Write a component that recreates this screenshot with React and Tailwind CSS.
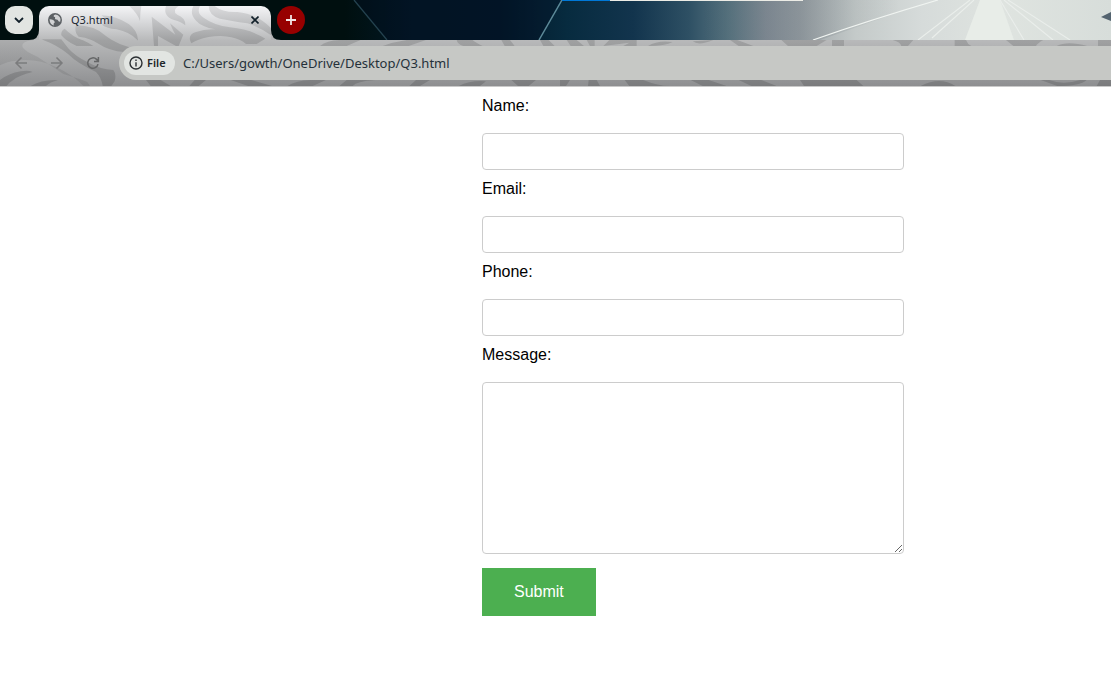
import React from 'react';

function ThemePattern({ id, viewBox }) {
  return (
    <svg
      aria-hidden="true"
      className="absolute inset-0 h-full w-full"
      viewBox={viewBox}
      preserveAspectRatio="xMinYMin slice"
    >
      <defs>
        <linearGradient id={`${id}-light`} gradientUnits="userSpaceOnUse" x1="0" y1="18" x2="0" y2="258">
          <stop offset="0" stopColor="#f4f4f6" />
          <stop offset="0.2" stopColor="#d8d9db" />
          <stop offset="0.43" stopColor="#b8b9ba" />
          <stop offset="1" stopColor="#8e8f91" />
        </linearGradient>
        <linearGradient id={`${id}-dark`} gradientUnits="userSpaceOnUse" x1="0" y1="18" x2="0" y2="258">
          <stop offset="0" stopColor="#dcdcde" />
          <stop offset="0.2" stopColor="#c0c1c3" />
          <stop offset="0.43" stopColor="#a0a1a2" />
          <stop offset="1" stopColor="#7a7b7d" />
        </linearGradient>
      </defs>
      <rect width="3333" height="258" fill={`url(#${id}-light)`} />
      <g fill={`url(#${id}-dark)`}>
        <path
          fillOpacity="0.55"
          d="M0 120H100Q62 124 68 142Q74 154 112 170Q152 196 190 222Q238 236 262 246L270 258H250Q220 226 170 202Q110 174 50 182Q20 184 0 196Z"
        />
        <path d="M124 118H184L206 146Q226 168 262 186Q300 208 340 210Q350 222 344 244L334 258H308Q304 232 288 216Q232 190 204 162Q170 134 124 118Z" />
        <path d="M0 240Q26 220 62 214Q86 210 98 216Q56 226 40 240Q26 248 20 258H0Z" />
        <path d="M92 258Q124 238 174 240Q150 246 138 258Z" />
        <path d="M228 76Q284 76 318 108Q350 132 388 142L372 156Q330 154 290 128Q262 112 236 110Q222 96 228 76Z" />
        <path d="M304 46Q350 48 386 72Q414 92 414 122Q390 96 350 88Q316 84 306 74Q336 66 304 46Z" />
        <path d="M184 106Q182 92 194 86Q220 112 252 122Q270 130 280 138H230Q202 126 184 106Z" />
        <path d="M388 18H424Q420 40 420 64Q414 42 388 18Z" />
        <path d="M455 50L526 104Q516 86 510 70L550 104L536 138H528L474 108V138H462Z" />
        <path d="M498 18H536Q514 32 532 44Q558 54 556 76Q544 66 522 60Q488 48 498 18Z" />
        <path d="M580 18H600Q588 40 612 54Q642 76 690 82Q752 88 796 116L770 132H738Q714 110 662 108Q610 108 574 130Q560 104 588 96Q616 86 646 88Q604 80 588 62Q568 42 580 18Z" />
        <path d="M626 18H644Q668 38 712 36Q772 42 813 84V106Q782 82 742 70Q692 62 660 56Q626 46 626 18Z" />
        <path d="M438 240H482L512 258H452ZM584 240H618L596 258H568ZM692 240H754L816 258H744Z" />
        <path d="M960 138Q980 122 1018 120H1082L1040 138ZM1148 138Q1180 126 1220 120H1278L1226 138ZM1370 120Q1372 132 1390 138H1448Q1424 126 1418 120ZM1504 120H1530L1544 138H1514ZM1620 120H1646L1664 138H1630ZM1700 120H1730L1752 138H1712ZM1760 120H1784V138H1770Z" />
        <path d="M1810 138L1828 120H1910V138H1870L1888 128ZM1944 138Q1972 120 2018 126Q1996 138 1944 138ZM2078 124Q2096 138 2140 120ZM2190 120L2216 138H2260L2212 120ZM2344 120L2364 138H2450L2480 120Z" />
        <path d="M2496 120H2532V138H2496ZM2678 120H2740L2724 138H2704Q2702 126 2678 120ZM2864 120H2898Q2902 132 2914 138H2864ZM3018 120H3130Q3112 130 3108 138H3040ZM3170 138Q3202 122 3262 138ZM3294 120H3333V138H3294Z" />
        <path d="M862 258Q890 242 930 240H978L938 258ZM1018 258L1040 240H1126Q1070 244 1058 258ZM1228 258L1248 240H1290L1260 258ZM1376 258Q1412 240 1458 244L1440 258ZM1534 240H1608L1586 258H1554ZM1680 240H1710L1698 258H1680ZM1766 240H1790L1800 258H1764ZM1874 240H1930Q1974 258 2010 258H1888Z" />
        <path d="M2072 240H2126L2180 258H2108ZM2216 240H2284L2330 258H2254ZM2400 240H2570L2590 258H2412ZM2762 258Q2820 228 2866 258ZM3122 240H3148Q3190 256 3240 240H3260Q3240 258 3172 258ZM3300 240H3333V258H3290Z" />
      </g>
    </svg>
  );
}

function Wallpaper() {
  return (
    <svg
      aria-hidden="true"
      className="absolute inset-0 h-full w-full"
      viewBox="0 0 1111 40"
      preserveAspectRatio="xMinYMin slice"
    >
      <defs>
        <linearGradient id="sky" gradientUnits="userSpaceOnUse" x1="0" y1="0" x2="1111" y2="0">
          <stop offset="0" stopColor="#000f0f" />
          <stop offset="0.31" stopColor="#000f0f" />
          <stop offset="0.37" stopColor="#021825" />
          <stop offset="0.45" stopColor="#021828" />
          <stop offset="0.51" stopColor="#072b3f" />
          <stop offset="0.57" stopColor="#12344d" />
          <stop offset="0.62" stopColor="#2e5064" />
          <stop offset="0.655" stopColor="#56727e" />
          <stop offset="0.69" stopColor="#858f98" />
          <stop offset="0.73" stopColor="#a5acaf" />
          <stop offset="0.77" stopColor="#c4cac9" />
          <stop offset="0.83" stopColor="#d6dbda" />
          <stop offset="0.9" stopColor="#dfe4e0" />
          <stop offset="1" stopColor="#d7ddda" />
        </linearGradient>
        <linearGradient id="shade" gradientUnits="userSpaceOnUse" x1="700" y1="0" x2="900" y2="0">
          <stop offset="0" stopColor="#1a2a38" stopOpacity="0" />
          <stop offset="0.5" stopColor="#1a2a38" stopOpacity="0.14" />
          <stop offset="1" stopColor="#1a2a38" stopOpacity="0" />
        </linearGradient>
      </defs>
      <rect width="1111" height="40" fill="url(#sky)" />
      <path d="M700 0H900V12L820 40H700Z" fill="url(#shade)" />
      <path d="M354 0L387 40H539L561 0Z" fill="#020f22" fillOpacity="0.4" />
      <path d="M980 0H1000L1014 40H965Z" fill="#e8ede8" />
      <g fill="none">
        <path d="M354 0L387 40" stroke="#24424f" strokeWidth="1.3" />
        <path d="M562 0L539 40" stroke="#5d8a99" strokeWidth="1.5" />
        <path d="M813 40Q870 20 938 0" stroke="#f0f4f1" strokeWidth="1.2" />
        <path d="M918 40L970 0M932 38L974 0M1000 0L1024 40M1004 0L1053 40M1008 0L1070 40" stroke="#eaeeeb" strokeWidth="1.1" />
      </g>
      <path d="M1101 17L1111 12V21Z" fill="#53636f" />
      <path d="M562 0H610V1H562Z" fill="#0078d7" />
      <path d="M610 0H803V1H610Z" fill="#ecece6" />
    </svg>
  );
}

function TabFlare({ className, d }) {
  return (
    <svg aria-hidden="true" viewBox="0 0 10 10" className={`absolute bottom-0 h-2.5 w-2.5 ${className}`}>
      <path d={d} fill="#b3b4b5" />
    </svg>
  );
}

function TabStrip() {
  return (
    <div className="relative flex h-10 items-end overflow-hidden bg-[#000f0f]">
      <Wallpaper />
      <button
        type="button"
        aria-label="Search tabs"
        className="relative mb-1.5 ml-[5px] flex h-7 w-7 items-center justify-center rounded-[10px] bg-[#e2e5e2]"
      >
        <svg viewBox="0 0 10 6" className="h-1.5 w-2.5" fill="none" stroke="#12202a" strokeWidth="1.8">
          <path d="M1 1L5 5L9 1" />
        </svg>
      </button>
      <div className="relative ml-1.5 h-[34px] w-[232px]">
        <TabFlare className="-left-2.5" d="M10 0Q10 10 0 10H10Z" />
        <TabFlare className="-right-2.5" d="M0 0Q0 10 10 10H0Z" />
        <div className="relative flex h-full items-center overflow-hidden rounded-t-[10px] pb-1.5 pl-[9px] pr-2.5">
          <ThemePattern id="tab" viewBox="117 18 696 102" />
          <svg aria-hidden="true" viewBox="0 0 14 14" className="relative h-3.5 w-3.5">
            <circle cx="7" cy="7" r="7" fill="#5d6165" />
            <path
              d="M1.5 6.2Q3.6 6 5.2 7Q6.6 7.8 6.7 9Q6.9 10 5.8 10.3Q5.4 11 5.8 12.5Q1.9 11.6 1.5 6.2ZM7.6 1.5Q5.6 1.7 5.6 3.1Q5.7 4.1 7 4Q7.4 4.5 6.9 5.2Q7 6.4 8.4 6.6Q9.8 6.6 10.2 7.8Q10.8 8.9 12.3 8.6Q13 6 11.7 4.1Q10.2 1.7 7.6 1.5Z"
              fill="#d2d3d5"
            />
          </svg>
          <span className="relative ml-[9px] flex-1 font-['Noto_Sans',sans-serif] text-[11px] leading-4 text-[#1b2630]">
            Q3.html
          </span>
          <button type="button" aria-label="Close tab" className="relative flex h-3 w-3 items-center justify-center">
            <svg viewBox="0 0 8 8" className="h-2 w-2" fill="none" stroke="#12202a" strokeWidth="1.6">
              <path d="M0.5 0.5L7.5 7.5M7.5 0.5L0.5 7.5" />
            </svg>
          </button>
        </div>
      </div>
      <button
        type="button"
        aria-label="New tab"
        className="relative mb-1.5 ml-1.5 flex h-7 w-7 items-center justify-center rounded-full bg-[#970000]"
      >
        <svg viewBox="0 0 10 10" className="h-2.5 w-2.5" fill="none" stroke="#f1e6e6" strokeWidth="1.8">
          <path d="M5 0V10M0 5H10" />
        </svg>
      </button>
    </div>
  );
}

function NavButton({ label, className, children }) {
  return (
    <button type="button" aria-label={label} className={`flex h-4 w-4 items-center justify-center ${className}`}>
      <svg viewBox="0 0 14 14" className="h-3.5 w-3.5" fill="none" stroke="currentColor" strokeWidth="1.5">
        {children}
      </svg>
    </button>
  );
}

function Toolbar() {
  return (
    <div className="relative flex h-[46px] items-center overflow-hidden pl-[13px] font-['Noto_Sans',sans-serif]">
      <ThemePattern id="toolbar" viewBox="0 120 3333 138" />
      <div className="relative flex w-[106px] shrink-0 gap-5">
        <NavButton label="Back" className="text-[#7b7c7d]">
          <path d="M13 7H3M7.5 1.5L2 7L7.5 12.5" />
        </NavButton>
        <NavButton label="Forward" className="text-[#7b7c7d]">
          <path d="M1 7H11M6.5 1.5L12 7L6.5 12.5" />
        </NavButton>
        <NavButton label="Reload" className="text-[#656667]">
          <path d="M12 8.2A5.2 5.2 0 1 1 10.6 3.4L12.4 5.2M12.4 1V5.4H8" />
        </NavButton>
      </div>
      <div className="relative flex h-[34px] flex-1 items-center rounded-l-full bg-[#c6c8c5] pl-[5px]">
        <button
          type="button"
          className="flex h-6 w-[51px] shrink-0 items-center gap-1 rounded-full bg-[#e2e5e2] pl-[5px] text-[11px] font-semibold leading-4 text-[#20262a]"
        >
          <svg aria-hidden="true" viewBox="0 0 14 14" className="h-3.5 w-3.5" fill="none" stroke="#2b3033" strokeWidth="1.4">
            <circle cx="7" cy="7" r="6" />
            <path d="M7 6.2V10.4M7 3.6V5" />
          </svg>
          File
        </button>
        <input
          type="text"
          aria-label="Address"
          defaultValue="C:/Users/gowth/OneDrive/Desktop/Q3.html"
          className="ml-2 h-6 min-w-0 flex-1 bg-transparent text-[13px] text-[#25313a] outline-none"
        />
      </div>
    </div>
  );
}

const fields = [
  { id: 'name', label: 'Name:', type: 'text' },
  { id: 'email', label: 'Email:', type: 'email' },
  { id: 'phone', label: 'Phone:', type: 'tel' },
];

function ContactForm() {
  return (
    <form
      className="col-start-2 flex flex-col items-start gap-[7px] font-['Liberation_Sans',Arial,sans-serif] text-[16px] leading-6 text-black"
      onSubmit={(event) => event.preventDefault()}
    >
      {fields.map((field) => (
        <div key={field.id} className="flex w-full flex-col gap-[15px]">
          <label htmlFor={field.id}>{field.label}</label>
          <input
            id={field.id}
            name={field.id}
            type={field.type}
            className="h-[37px] w-full rounded border border-[#cccccc] bg-white px-2.5"
          />
        </div>
      ))}
      <div className="flex w-full flex-col gap-[15px]">
        <label htmlFor="message">Message:</label>
        <textarea
          id="message"
          name="message"
          className="block h-[172px] w-full resize rounded border border-[#cccccc] bg-white p-2.5"
        />
      </div>
      <button type="submit" className="mt-[7px] h-12 bg-[#4caf50] px-8 text-white">
        Submit
      </button>
    </form>
  );
}

export default function App() {
  return (
    <div className="min-h-screen bg-white">
      <header className="border-b border-[#c9c9c9]">
        <TabStrip />
        <Toolbar />
      </header>
      <main className="grid grid-cols-[482fr_422fr_207fr] pb-8 pt-[7px]">
        <ContactForm />
      </main>
    </div>
  );
}
